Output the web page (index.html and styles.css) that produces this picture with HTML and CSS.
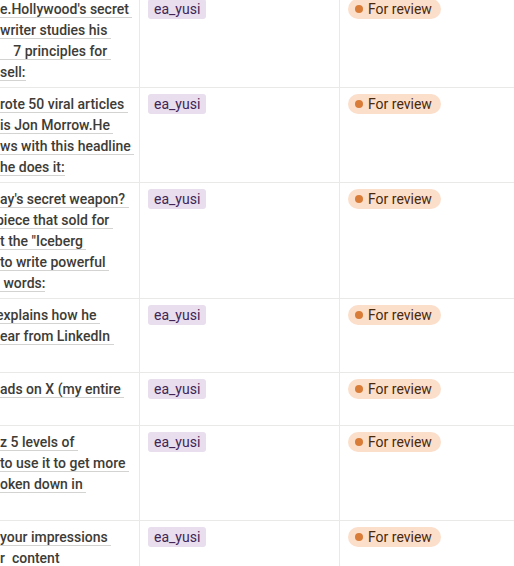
FILE: index.html
```html
<!DOCTYPE html>
<html lang="en">
<head>
<meta charset="utf-8">
<link rel="stylesheet" href="styles.css">
</head>
<body>
<div class="table">
  <div class="row">
    <div class="cell title">
      <div class="ln"><span class="t">e.Hollywood's secret </span></div>
      <div class="ln"><span class="t">writer studies his </span></div>
      <div class="ln"><span class="t">&nbsp;&nbsp;&nbsp;&#8201;7 principles for </span></div>
      <div class="ln"><span class="t">sell:</span></div>
    </div>
    <div class="cell prop"><span class="tag">ea_yusi</span></div>
    <div class="cell prop"><span class="status"><span class="dot"></span>For review</span></div>
  </div>
  <div class="row">
    <div class="cell title">
      <div class="ln"><span class="t">rote 50 viral articles </span></div>
      <div class="ln"><span class="t">is Jon Morrow.He </span></div>
      <div class="ln"><span class="t">ws with this headline </span></div>
      <div class="ln"><span class="t">he does it:</span></div>
    </div>
    <div class="cell prop"><span class="tag">ea_yusi</span></div>
    <div class="cell prop"><span class="status"><span class="dot"></span>For review</span></div>
  </div>
  <div class="row">
    <div class="cell title">
      <div class="ln"><span class="t">ay's secret weapon? </span></div>
      <div class="ln cut"><span class="t">piece that sold for </span></div>
      <div class="ln"><span class="t">t the "Iceberg </span></div>
      <div class="ln"><span class="t">to write powerful </span></div>
      <div class="ln"><span class="t">&nbsp;words:</span></div>
    </div>
    <div class="cell prop"><span class="tag">ea_yusi</span></div>
    <div class="cell prop"><span class="status"><span class="dot"></span>For review</span></div>
  </div>
  <div class="row">
    <div class="cell title">
      <div class="ln cut"><span class="t">explains how he </span></div>
      <div class="ln"><span class="t">ear from LinkedIn </span></div>
      <div class="ln"></div>
    </div>
    <div class="cell prop"><span class="tag">ea_yusi</span></div>
    <div class="cell prop"><span class="status"><span class="dot"></span>For review</span></div>
  </div>
  <div class="row">
    <div class="cell title">
      <div class="ln"><span class="t">ads on X (my entire </span></div>
      <div class="ln"></div>
    </div>
    <div class="cell prop"><span class="tag">ea_yusi</span></div>
    <div class="cell prop"><span class="status"><span class="dot"></span>For review</span></div>
  </div>
  <div class="row">
    <div class="cell title">
      <div class="ln"><span class="t">z 5 levels of </span></div>
      <div class="ln"><span class="t">to use it to get more </span></div>
      <div class="ln"><span class="t">oken down in </span></div>
      <div class="ln"></div>
    </div>
    <div class="cell prop"><span class="tag">ea_yusi</span></div>
    <div class="cell prop"><span class="status"><span class="dot"></span>For review</span></div>
  </div>
  <div class="row">
    <div class="cell title">
      <div class="ln"><span class="t">your impressions </span></div>
      <div class="ln"><span class="t">r&nbsp;&nbsp;content </span></div>
      <div class="ln"></div>
    </div>
    <div class="cell prop"><span class="tag">ea_yusi</span></div>
    <div class="cell prop"><span class="status"><span class="dot"></span>For review</span></div>
  </div>
</div>
</body>
</html>
```
FILE: styles.css
```css
html, body {
  margin: 0;
  padding: 0;
  background: #ffffff;
  overflow: hidden;
}

body {
  font-family: Roboto, "Liberation Sans", sans-serif;
  font-size: 14px;
  color: rgb(55, 53, 47);
}

.table {
  margin-top: -7px;
  width: 640px;
}

.row {
  display: grid;
  grid-template-columns: 140px 200px 300px;
  border-bottom: 1px solid rgb(233, 233, 231);
}

.cell {
  border-right: 1px solid rgb(233, 233, 231);
  min-width: 0;
}

.title {
  padding: 6px 0 4px;
  overflow: hidden;
  font-weight: 500;
  line-height: 21px;
  color: rgb(62, 60, 55);
}

.ln {
  height: 21px;
  white-space: pre;
}

.ln.cut {
  margin-left: -4px;
}

.t {
  border-bottom: 1px solid rgba(55, 53, 47, 0.22);
}

.prop {
  padding: 6px 8px;
}

.tag {
  display: inline-flex;
  align-items: center;
  height: 20px;
  padding: 0 6px;
  border-radius: 3px;
  background: rgb(232, 222, 238);
  color: rgb(65, 36, 84);
  line-height: 20px;
  white-space: nowrap;
}

.status {
  display: inline-flex;
  align-items: center;
  height: 20px;
  padding: 0 9px 0 7px;
  border-radius: 10px;
  background: rgb(251, 223, 203);
  color: rgb(73, 41, 14);
  line-height: 20px;
  white-space: nowrap;
}

.dot {
  width: 8px;
  height: 8px;
  border-radius: 50%;
  background: rgb(217, 124, 55);
  margin-right: 5px;
  flex: none;
}
```
